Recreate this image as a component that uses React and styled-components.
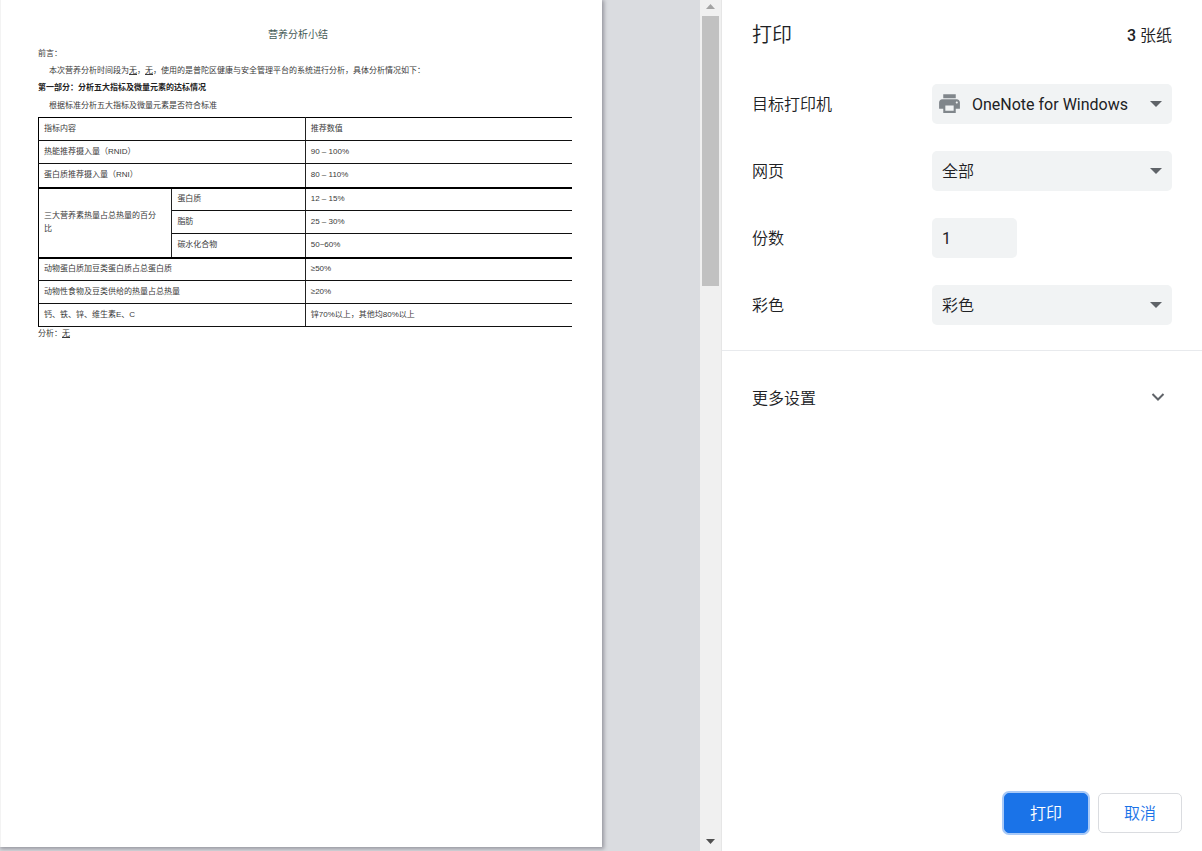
import React from "react";
import styled, { createGlobalStyle, css } from "styled-components";

const GlobalStyle = createGlobalStyle`
  * { box-sizing: border-box; }
  body {
    margin: 0;
    background: #fff;
    color: #202124;
    font-family: Roboto, "Noto Sans CJK SC", sans-serif;
    font-size: 16px;
  }
`;

const Dialog = styled.div`
  display: flex;
  min-height: 100vh;
`;

const Preview = styled.main`
  flex: 1;
  display: flex;
  min-width: 0;
  background: #dadce0;
`;

const Sheet = styled.article`
  flex: 1;
  min-width: 0;
  margin: 0 98px 4px 0;
  padding: 25px 30px 24px 37px;
  background: #fff;
  border-left: 1px solid #f3f3f3;
  box-shadow: 1px 1px 4px 1px #96969e;
  color: #3a3a3a;
  font-family: "Liberation Sans", "Noto Sans CJK SC", sans-serif;
  font-size: 8px;
  line-height: 17px;
`;

const SheetTitle = styled.h1`
  margin: 0;
  padding-right: 14px;
  text-align: center;
  color: #445a56;
  font-size: 10px;
  font-weight: 400;
  line-height: 20px;
`;

const Line = styled.p`
  margin: 0;
  padding-left: ${(p) => (p.$indent ? "11px" : "0")};
`;

const Closing = styled(Line)`
  line-height: 13px;
`;

const Heading = styled.h2`
  margin: 0;
  color: #222;
  font-size: 8px;
  font-weight: 700;
  line-height: 18px;
`;

const IndexTable = styled.table`
  width: 100%;
  margin-top: 3px;
  table-layout: fixed;
  border-collapse: collapse;
  border-left: 1px solid #000;
  border-top: 1px solid #000;
  line-height: 13px;
`;

const GroupColumn = styled.col`
  width: 25%;
`;

const ValueColumn = styled.col`
  width: 50%;
`;

const Row = styled.tr`
  height: 23px;
  border-bottom: 1px solid #111;
  ${(p) =>
    p.$strong &&
    css`
      height: 24px;
      border-bottom: 2px solid #000;
    `}
`;

const Cell = styled.td`
  padding: 0 5px 2px;
  border-bottom: inherit;
  border-right: 1px solid #222;
  &:last-child {
    border-right: none;
  }
`;

const GroupCell = styled(Cell)`
  border-bottom: 2px solid #000;
  padding-right: 8px;
`;

const Scrollbar = styled.div`
  flex: none;
  width: 22px;
  display: flex;
  flex-direction: column;
  align-items: center;
  padding-right: 1px;
  background: #f0f0f0;
  border-right: 1px solid #e6e6e6;
`;

const ScrollArrow = styled.svg`
  display: block;
  width: 17px;
  height: 16px;
  flex: none;
`;

const ScrollTrack = styled.div`
  flex: 1;
  display: flex;
  flex-direction: column;
  width: 17px;
`;

const ScrollThumb = styled.div`
  flex: 33;
  background: #c1c1c1;
`;

const ScrollRest = styled.div`
  flex: 67;
`;

const Settings = styled.form`
  flex: none;
  width: 480px;
  display: flex;
  flex-direction: column;
  background: #fff;
`;

const Header = styled.header`
  display: flex;
  align-items: center;
  justify-content: space-between;
  height: 70px;
  padding: 0 30px 2px;
`;

const Title = styled.h2`
  margin: 0;
  font-size: 20px;
  font-weight: 350;
  font-family: "Noto Sans CJK SC", sans-serif;
  line-height: 28px;
`;

const SheetCount = styled.span`
  font-weight: 500;
  span {
    font-weight: 350;
  }
`;

const Fields = styled.div`
  display: flex;
  flex-direction: column;
  gap: 27px;
  padding: 14px 30px 25px;
  border-bottom: 1px solid #e8eaed;
`;

const Field = styled.div`
  display: flex;
  align-items: center;
`;

const Label = styled.label`
  width: 180px;
  padding-bottom: 2px;
  font-weight: 350;
`;

const SelectBox = styled.div`
  position: relative;
  flex: 1;
`;

const control = css`
  height: 40px;
  border: none;
  border-radius: 5px;
  background: #f1f3f4;
  color: #202124;
  font: inherit;
  outline: none;
`;

const Select = styled.select`
  ${control}
  appearance: none;
  display: block;
  width: 100%;
  padding: 0 32px 0 ${(p) => (p.$withIcon ? "40px" : "10px")};
  font-weight: ${(p) => (p.$withIcon ? 400 : 350)};
`;

const NumberBox = styled.input`
  ${control}
  width: 85px;
  padding: 0 10px;
`;

const Caret = styled.svg`
  position: absolute;
  top: 17px;
  right: 10px;
  width: 12px;
  height: 6px;
  pointer-events: none;
`;

const PrinterIcon = styled.svg`
  position: absolute;
  top: 7px;
  left: 5px;
  width: 25px;
  height: 25px;
  pointer-events: none;
`;

const MoreButton = styled.button`
  display: flex;
  align-items: center;
  justify-content: space-between;
  height: 91px;
  padding: 0 37px 0 30px;
  border: none;
  background: none;
  color: inherit;
  font: inherit;
  font-weight: 350;
`;

const Footer = styled.footer`
  display: flex;
  justify-content: flex-end;
  gap: 10px;
  margin-top: auto;
  padding: 18px 20px;
`;

const Button = styled.button`
  width: 84px;
  height: 40px;
  padding: 0 0 2px;
  border: 1px solid #dadce0;
  border-radius: 5px;
  background: #fff;
  color: #1a73e8;
  font: inherit;
  font-weight: 350;
  ${(p) =>
    p.$primary &&
    css`
      border-color: #1a73e8;
      background: #1a73e8;
      color: #fff;
      box-shadow: 0 0 0 2px #a8c9f7;
    `}
`;

function SelectField({ id, label, value, icon }) {
  return (
    <Field>
      <Label htmlFor={id}>{label}</Label>
      <SelectBox>
        <Select id={id} defaultValue={value} $withIcon={Boolean(icon)}>
          <option>{value}</option>
        </Select>
        {icon}
        <Caret viewBox="0 0 12 6" aria-hidden="true">
          <path d="M0 0h12L6 6z" fill="#5f6368" />
        </Caret>
      </SelectBox>
    </Field>
  );
}

const printer = (
  <PrinterIcon viewBox="0 0 24 24" aria-hidden="true">
    <path
      fill="#80868b"
      d="M19 8H5c-1.66 0-3 1.34-3 3v6h4v4h12v-4h4v-6c0-1.66-1.34-3-3-3zm-3 11H8v-5h8v5zm3-7c-.55 0-1-.45-1-1s.45-1 1-1 1 .45 1 1-.45 1-1 1zm-1-9H6v4h12V3z"
    />
  </PrinterIcon>
);

export default function App() {
  return (
    <>
      <GlobalStyle />
      <Dialog>
        <Preview>
          <Sheet>
            <SheetTitle>营养分析小结</SheetTitle>
            <Line>前言：</Line>
            <Line $indent>
              本次营养分析时间段为<u>无</u>，<u>无</u>，使用的是普陀区健康与安全管理平台的系统进行分析，具体分析情况如下：
            </Line>
            <Heading>第一部分：分析五大指标及微量元素的达标情况</Heading>
            <Line $indent>根据标准分析五大指标及微量元素是否符合标准</Line>
            <IndexTable>
              <colgroup>
                <GroupColumn />
                <GroupColumn />
                <ValueColumn />
              </colgroup>
              <tbody>
                <Row>
                  <Cell colSpan={2}>指标内容</Cell>
                  <Cell>推荐数值</Cell>
                </Row>
                <Row>
                  <Cell colSpan={2}>热能推荐摄入量（RNID）</Cell>
                  <Cell>90 – 100%</Cell>
                </Row>
                <Row $strong>
                  <Cell colSpan={2}>蛋白质推荐摄入量（RNI）</Cell>
                  <Cell>80 – 110%</Cell>
                </Row>
                <Row>
                  <GroupCell rowSpan={3}>三大营养素热量占总热量的百分比</GroupCell>
                  <Cell>蛋白质</Cell>
                  <Cell>12 – 15%</Cell>
                </Row>
                <Row>
                  <Cell>脂肪</Cell>
                  <Cell>25 – 30%</Cell>
                </Row>
                <Row $strong>
                  <Cell>碳水化合物</Cell>
                  <Cell>50~60%</Cell>
                </Row>
                <Row>
                  <Cell colSpan={2}>动物蛋白质加豆类蛋白质占总蛋白质</Cell>
                  <Cell>≥50%</Cell>
                </Row>
                <Row>
                  <Cell colSpan={2}>动物性食物及豆类供给的热量占总热量</Cell>
                  <Cell>≥20%</Cell>
                </Row>
                <Row>
                  <Cell colSpan={2}>钙、铁、锌、维生素E、C</Cell>
                  <Cell>锌70%以上，其他均80%以上</Cell>
                </Row>
              </tbody>
            </IndexTable>
            <Closing>
              分析：<u>无</u>
            </Closing>
          </Sheet>
          <Scrollbar aria-hidden="true">
            <ScrollArrow viewBox="0 0 17 16">
              <path d="M4 9l4.500-5L13 9z" fill="#a3a3a3" />
            </ScrollArrow>
            <ScrollTrack>
              <ScrollThumb />
              <ScrollRest />
            </ScrollTrack>
            <ScrollArrow viewBox="0 0 17 16">
              <path d="M4 4h9l-4.500 5z" fill="#505050" />
            </ScrollArrow>
          </Scrollbar>
        </Preview>
        <Settings onSubmit={(e) => e.preventDefault()}>
          <Header>
            <Title>打印</Title>
            <SheetCount>
              3 <span>张纸</span>
            </SheetCount>
          </Header>
          <Fields>
            <SelectField id="printer" label="目标打印机" value="OneNote for Windows" icon={printer} />
            <SelectField id="pages" label="网页" value="全部" />
            <Field>
              <Label htmlFor="copies">份数</Label>
              <NumberBox id="copies" type="text" inputMode="numeric" defaultValue="1" />
            </Field>
            <SelectField id="color" label="彩色" value="彩色" />
          </Fields>
          <MoreButton type="button" aria-expanded="false">
            更多设置
            <svg width="14" height="10" viewBox="0 0 14 10" aria-hidden="true">
              <path d="M1.500 2L7 7.500 12.500 2" fill="none" stroke="#5f6368" strokeWidth="2" />
            </svg>
          </MoreButton>
          <Footer>
            <Button type="submit" $primary>打印</Button>
            <Button type="button">取消</Button>
          </Footer>
        </Settings>
      </Dialog>
    </>
  );
}
